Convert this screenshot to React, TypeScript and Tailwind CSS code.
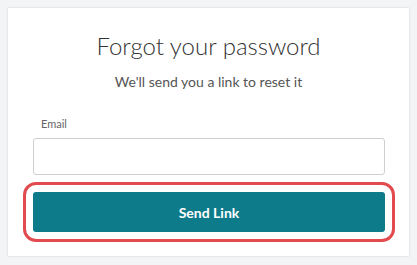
export default function App() {
  return (
    <div className="w-[417px] h-[265px] bg-[#f3f4f6] pt-2 pl-2 font-['Lato','Liberation_Sans',sans-serif]">
      <div className="w-[401px] h-[248px] bg-white shadow-[0_0_2px_rgba(0,0,0,0.15)] px-[25px] pt-[23px]">
        <h1 className="text-center text-[24px] leading-[29px] font-light text-[#333]">Forgot your password</h1>
        <p className="mt-3 text-center text-[14px] leading-[20px] text-[#555]">We'll send you a link to reset it</p>
        <label className="block mt-6 ml-2 text-[11px] leading-[16px] text-[#666]">Email</label>
        <input
          type="email"
          className="block mt-[6px] w-[352px] h-[37px] rounded-[3px] border border-[#cfcfcf] bg-white outline-none"
        />
        <button className="mt-[17px] w-[352px] h-[40px] rounded-[3px] bg-[#0e7b8b] text-white text-[14px] font-bold outline-3 outline-[#e24a4e] outline-offset-[7px]">
          Send Link
        </button>
      </div>
    </div>
  );
}
